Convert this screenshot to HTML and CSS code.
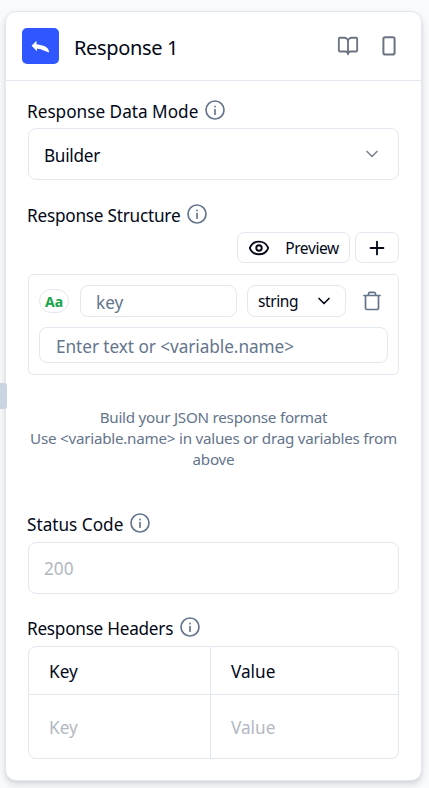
FILE: index.html
```html
<!DOCTYPE html>
<html lang="en">
<head>
<meta charset="utf-8">
<title>Response 1</title>
<link rel="stylesheet" href="styles.css">
</head>
<body>
<svg class="defs" width="0" height="0" aria-hidden="true">
  <symbol id="info" viewBox="0 0 24 24"><circle cx="12" cy="12" r="10.8"/><path d="M12 17v-5.5M12 7.6v.6"/></symbol>
  <symbol id="chevron" viewBox="0 0 24 24"><path d="m6 9 6 6 6-6"/></symbol>
</svg>
<main class="card">
  <header class="head">
    <div class="logo"><svg width="19" height="14" viewBox="0 0 19 14"><path d="M.6 5.800 5.500 .8V4.300C10 5.200 17.500 5.500 18.200 12.400 14 11.600 12 9.500 6 8.600V11.200Z"/></svg></div>
    <h1 class="title">Response 1</h1>
    <svg class="icon book" width="22" height="22" viewBox="0 0 24 24"><path d="M12 7v14M3 18a1 1 0 0 1-1-1V4a1 1 0 0 1 1-1h5a4 4 0 0 1 4 4 4 4 0 0 1 4-4h5a1 1 0 0 1 1 1v13a1 1 0 0 1-1 1h-6a3 3 0 0 0-3 3 3 3 0 0 0-3-3z"/></svg>
    <svg class="icon" width="14" height="20" viewBox="0 0 14 20"><rect x="1.400" y="1.200" width="11.200" height="17.400" rx="1.800"/></svg>
  </header>
  <section class="content">
    <div class="label"><span>Response Data Mode</span><svg class="icon info"><use href="#info"/></svg></div>
    <div class="field"><span class="t-builder">Builder</span><svg class="icon arrow"><use href="#chevron"/></svg></div>

    <div class="label structure"><span class="l-structure">Response Structure</span><svg class="icon info"><use href="#info"/></svg></div>
    <div class="actions">
      <button class="btn preview"><svg class="icon" width="22" height="22" viewBox="0 0 24 24"><path d="M2.100 12.300a1 1 0 0 1 0-.7 10.750 10.750 0 0 1 19.800 0 1 1 0 0 1 0 .7 10.750 10.750 0 0 1-19.800 0"/><circle cx="12" cy="12" r="3"/></svg><span>Preview</span></button>
      <button class="btn plus"><svg class="icon" width="22" height="22" viewBox="0 0 24 24"><path d="M5 12h14M12 5v14"/></svg></button>
    </div>
    <div class="builder">
      <div class="row">
        <span class="pill">Aa</span>
        <div class="box key"><span>key</span></div>
        <div class="box type"><span>string</span><svg class="icon" width="20" height="20"><use href="#chevron"/></svg></div>
        <svg class="icon trash" width="18" height="20" viewBox="0 0 18 20"><path d="M1 4.500h16M15.500 4.500v12.500a1.500 1.500 0 0 1-1.500 1.500H4a1.500 1.500 0 0 1-1.500-1.500V4.500M5.500 4.500V2.800A1.500 1.500 0 0 1 7 1.300h4a1.500 1.500 0 0 1 1.500 1.500v1.700"/></svg>
      </div>
      <div class="box value"><span>Enter text or &lt;variable.name&gt;</span></div>
    </div>
    <p class="hint">Build your JSON response format<br>Use &lt;variable.name&gt; in values or drag variables from above</p>

    <div class="label status"><span>Status Code</span><svg class="icon info"><use href="#info"/></svg></div>
    <div class="field code faint"><span>200</span></div>

    <div class="label headers"><span class="l-headers">Response Headers</span><svg class="icon info"><use href="#info"/></svg></div>
    <div class="table">
      <div class="cell th"><span>Key</span></div><div class="cell th"><span>Value</span></div>
      <div class="cell faint"><span>Key</span></div><div class="cell faint"><span>Value</span></div>
    </div>
  </section>
</main>
<div class="handle"></div>
</body>
</html>
```
FILE: styles.css
```css
* { box-sizing: border-box; }
body {
  margin: 0;
  height: 788px;
  padding: 11px 7px 7px 5px;
  overflow: hidden;
  background: #f9fafc;
  color: #020817;
  font: 17.2px/24px "Noto Sans", sans-serif;
}
.defs { position: absolute; }
span { white-space: nowrap; }
.card {
  height: 770px;
  background: #fff;
  border: 1px solid #e2e8f0;
  border-radius: 11px;
  box-shadow: 0 4px 7px rgba(15, 23, 42, .13), 0 1px 3px rgba(15, 23, 42, .06);
}
.icon {
  flex: none;
  fill: none;
  stroke: currentColor;
  stroke-width: 2;
  stroke-linecap: round;
  stroke-linejoin: round;
}
.head {
  display: flex;
  align-items: center;
  height: 69px;
  padding: 0 25px 0 16px;
  border-bottom: 1px solid #e2e8f0;
  color: #6b7280;
}
.logo {
  display: grid;
  place-items: center;
  width: 37px;
  height: 36px;
  padding-top: 2px;
  border-radius: 5px;
  background: #3056ff;
}
.logo svg { fill: #fff; }
.title {
  flex: 1;
  margin: 0 0 0 15px;
  padding-top: 3px;
  color: #020817;
  font-size: 20px;
  font-weight: 400;
  letter-spacing: -.35px;
}
.book { margin-right: 23px; }
.content { padding: 19px 22px 0; }
.label { display: flex; align-items: center; height: 24px; margin: 0 0 4px -1px; }
.info { width: 20px; height: 20px; margin: -4px 0 0 7px; color: #64748b; }
.l-structure { letter-spacing: -.23px; }
.l-headers { letter-spacing: -.26px; }
.field {
  display: flex;
  align-items: center;
  justify-content: space-between;
  height: 52px;
  padding: 3px 16px 0 15px;
  border: 1px solid #e2e8f0;
  border-radius: 8px;
}
.code { padding-top: 1px; }
.t-builder { letter-spacing: -.3px; }
.arrow { width: 20px; height: 20px; margin-top: -3px; color: #808590; }
.structure { margin-top: 24px; }
.actions { display: flex; justify-content: flex-end; gap: 5px; }
.btn {
  display: flex;
  align-items: center;
  justify-content: center;
  height: 31px;
  padding: 0;
  border: 1px solid #e2e8f0;
  border-radius: 7px;
  background: #fff;
  color: #020817;
  font: 15.5px/22px "Noto Sans", sans-serif;
}
.preview { width: 113px; gap: 15px; letter-spacing: -.4px; }
.preview span { padding-top: 1px; }
.plus { width: 44px; }
.builder {
  height: 101px;
  margin-top: 11px;
  padding: 10px;
  border: 1px solid #e2e8f0;
  border-radius: 5px;
}
.row { display: flex; align-items: center; height: 32px; }
.pill {
  width: 30px;
  height: 24px;
  border: 1px solid #e2e8f0;
  border-radius: 12px;
  color: #16a34a;
  font-size: 14px;
  font-weight: 700;
  line-height: 23px;
  text-align: center;
}
.box {
  display: flex;
  align-items: center;
  height: 32px;
  border: 1px solid #e2e8f0;
  border-radius: 8px;
  color: #64748b;
}
.key { width: 157px; margin: 0 10px 0 11px; padding: 3px 0 0 15px; }
.type { width: 99px; justify-content: space-between; padding: 0 11px 0 10px; color: #020817; font-size: 15.5px; letter-spacing: -.4px; }
.trash { margin-left: 17px; color: #64748b; stroke-width: 1.7; }
.value { height: 36px; margin-top: 10px; padding: 3px 0 0 16px; letter-spacing: -.05px; }
.hint {
  height: 63px;
  margin: 32px 0 43px;
  color: #64748b;
  font-size: 15.2px;
  line-height: 21px;
  letter-spacing: -.24px;
  text-align: center;
}
.status { margin-bottom: 5px; }
.faint { color: #b2b8c2; }
.headers { margin-top: 23px; margin-bottom: 5px; }
.table {
  display: grid;
  grid-template-columns: 182px 1fr;
  grid-template-rows: 48px 63px;
  height: 113px;
  border: 1px solid #e2e8f0;
  border-radius: 8px;
}
.cell { display: flex; align-items: center; padding: 2px 20px 0; }
.th { border-bottom: 1px solid #e2e8f0; }
.cell:nth-child(odd) { border-right: 1px solid #e2e8f0; }
.handle {
  position: absolute;
  left: 0;
  top: 383px;
  width: 7px;
  height: 26px;
  border-radius: 0 3px 3px 0;
  background: #cbd5e1;
}
```
